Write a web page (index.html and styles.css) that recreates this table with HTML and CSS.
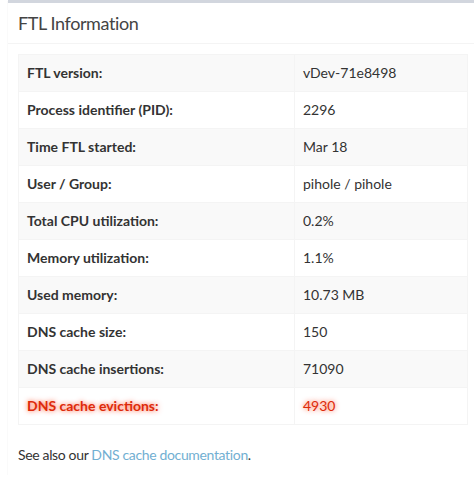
FILE: index.html
```html
<!DOCTYPE html>
<html>
<head>
<meta charset="utf-8">
<link rel="stylesheet" href="styles.css">
</head>
<body>
<div class="box">
  <div class="box-header">
    <h3 class="box-title">FTL Information</h3>
  </div>
  <div class="box-body">
    <table class="info-table">
      <tbody>
        <tr><th>FTL version:</th><td>vDev-71e8498</td></tr>
        <tr><th>Process identifier (PID):</th><td>2296</td></tr>
        <tr><th>Time FTL started:</th><td>Mar 18</td></tr>
        <tr><th>User / Group:</th><td>pihole / pihole</td></tr>
        <tr><th>Total CPU utilization:</th><td>0.2%</td></tr>
        <tr><th>Memory utilization:</th><td>1.1%</td></tr>
        <tr><th>Used memory:</th><td>10.73 MB</td></tr>
        <tr><th>DNS cache size:</th><td>150</td></tr>
        <tr><th>DNS cache insertions:</th><td>71090</td></tr>
        <tr class="alert-row"><th>DNS cache evictions:</th><td>4930</td></tr>
      </tbody>
    </table>
    <p class="note">See also our <a href="#">DNS cache documentation</a>.</p>
  </div>
</div>
</body>
</html>
```

FILE: styles.css
```css
html, body {
  margin: 0;
  padding: 0;
  background: #ffffff;
  font-family: "Lato", "Liberation Sans", sans-serif;
  font-size: 14px;
  color: #333333;
}

.box {
  margin-left: 8px;
  width: 470px;
  background: #ffffff;
  border-top: 3px solid #d2d6de;
  box-shadow: 0 1px 1px rgba(0, 0, 0, 0.12);
}

.box-header {
  padding: 10px;
  border-bottom: 1px solid #f4f4f4;
}

.box-title {
  margin: 0;
  font-size: 18px;
  font-weight: 400;
  line-height: 20px;
  letter-spacing: -0.4px;
  color: #444444;
}

.box-body {
  padding: 10px;
}

.info-table {
  width: 450px;
  border-collapse: collapse;
  border: 1px solid #f4f4f4;
  margin-bottom: 20px;
}

.info-table th,
.info-table td {
  padding: 8px;
  line-height: 20px;
  text-align: left;
  border: 1px solid #f4f4f4;
}

.info-table th {
  width: 259px;
  font-weight: 700;
}

.info-table tr:nth-child(odd) {
  background: #f9f9f9;
}

.alert-row th,
.alert-row td {
  color: #dd2a0a;
  text-shadow: 0 0 5px rgba(255, 50, 0, 0.8);
}

.note {
  margin: 0;
  line-height: 20px;
  letter-spacing: -0.35px;
}

.note a {
  color: #72afd2;
  text-decoration: none;
}
```
